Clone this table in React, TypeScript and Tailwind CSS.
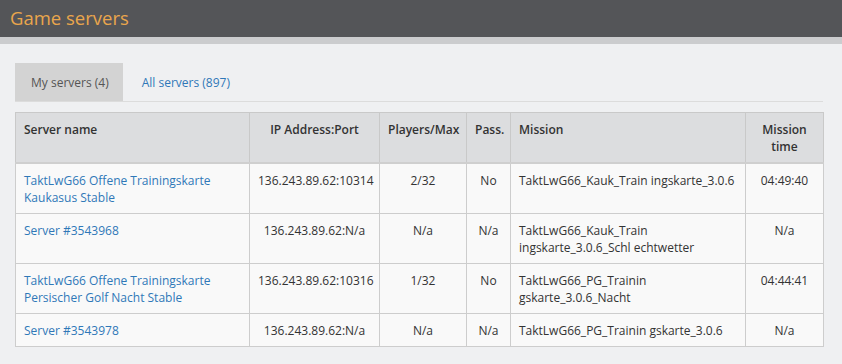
import React from "react";

type Row = {
  name: string;
  ip: string;
  players: string;
  pass: string;
  mission: string;
  time: string;
};

const rows: Row[] = [
  {
    name: "TaktLwG66 Offene Trainingskarte Kaukasus Stable",
    ip: "136.243.89.62:10314",
    players: "2/32",
    pass: "No",
    mission: "TaktLwG66_Kauk_Train ingskarte_3.0.6",
    time: "04:49:40",
  },
  {
    name: "Server #3543968",
    ip: "136.243.89.62:N/a",
    players: "N/a",
    pass: "N/a",
    mission: "TaktLwG66_Kauk_Train ingskarte_3.0.6_Schl echtwetter",
    time: "N/a",
  },
  {
    name: "TaktLwG66 Offene Trainingskarte Persischer Golf Nacht Stable",
    ip: "136.243.89.62:10316",
    players: "1/32",
    pass: "No",
    mission: "TaktLwG66_PG_Trainin gskarte_3.0.6_Nacht",
    time: "04:44:41",
  },
  {
    name: "Server #3543978",
    ip: "136.243.89.62:N/a",
    players: "N/a",
    pass: "N/a",
    mission: "TaktLwG66_PG_Trainin gskarte_3.0.6",
    time: "N/a",
  },
];

const th = "border border-[#c9c9c9] border-b-2 border-b-[#cfcfcf] px-2 pt-[8px] pb-[7px] align-top font-semibold text-[#333]";
const td = "border border-[#cdcdcd] px-2 pt-[8px] pb-[7px] align-top text-[#333]";

export default function App() {
  return (
    <div
      className="w-[842px] h-[364px] bg-[#eff0f2] overflow-hidden"
      style={{ fontFamily: '"Segoe UI", "Open Sans", "Noto Sans", sans-serif' }}
    >
      <div className="h-[37px] bg-[#545558] flex items-center px-[10px]">
        <h1 className="text-[18.5px] text-[#eaa64c] font-normal leading-none">Game servers</h1>
      </div>
      <div className="h-[7px] bg-[#cbccce]" />

      <div className="ml-[15px] w-[808px] pt-[19px]">
        <div className="flex border-b border-[#dcdcdc] text-[12px] leading-[17px]">
          <div className="h-[38px] pl-[16px] pr-[14px] flex items-center bg-[#d3d3d3] text-[#555]">My servers (4)</div>
          <div className="h-[38px] px-[16px] ml-[3px] flex items-center text-[#2f78b8]">All servers (897)</div>
        </div>

        <table className="mt-[10px] w-[808px] table-fixed border-collapse text-[12px] leading-[17px]">
          <colgroup>
            <col className="w-[234px]" />
            <col className="w-[130px]" />
            <col className="w-[87px]" />
            <col className="w-[44px]" />
            <col className="w-[235px]" />
            <col className="w-[78px]" />
          </colgroup>
          <thead>
            <tr className="bg-[#dcdddf]">
              <th className={`${th} text-left`}>Server name</th>
              <th className={`${th} text-center`}>IP Address:Port</th>
              <th className={`${th} text-center`}>Players/Max</th>
              <th className={`${th} text-center`}>Pass.</th>
              <th className={`${th} text-left`}>Mission</th>
              <th className={`${th} text-center`}>Mission time</th>
            </tr>
          </thead>
          <tbody>
            {rows.map((r) => (
              <tr key={r.name} className="bg-[#f9f9f9]">
                <td className={`${td} text-left`}>
                  <a className="text-[#2f78b8]" href="#">{r.name}</a>
                </td>
                <td className={`${td} text-center`}>{r.ip}</td>
                <td className={`${td} text-center`}>{r.players}</td>
                <td className={`${td} text-center`}>{r.pass}</td>
                <td className={`${td} text-left`}>{r.mission}</td>
                <td className={`${td} text-center`}>{r.time}</td>
              </tr>
            ))}
          </tbody>
        </table>
      </div>
    </div>
  );
}
